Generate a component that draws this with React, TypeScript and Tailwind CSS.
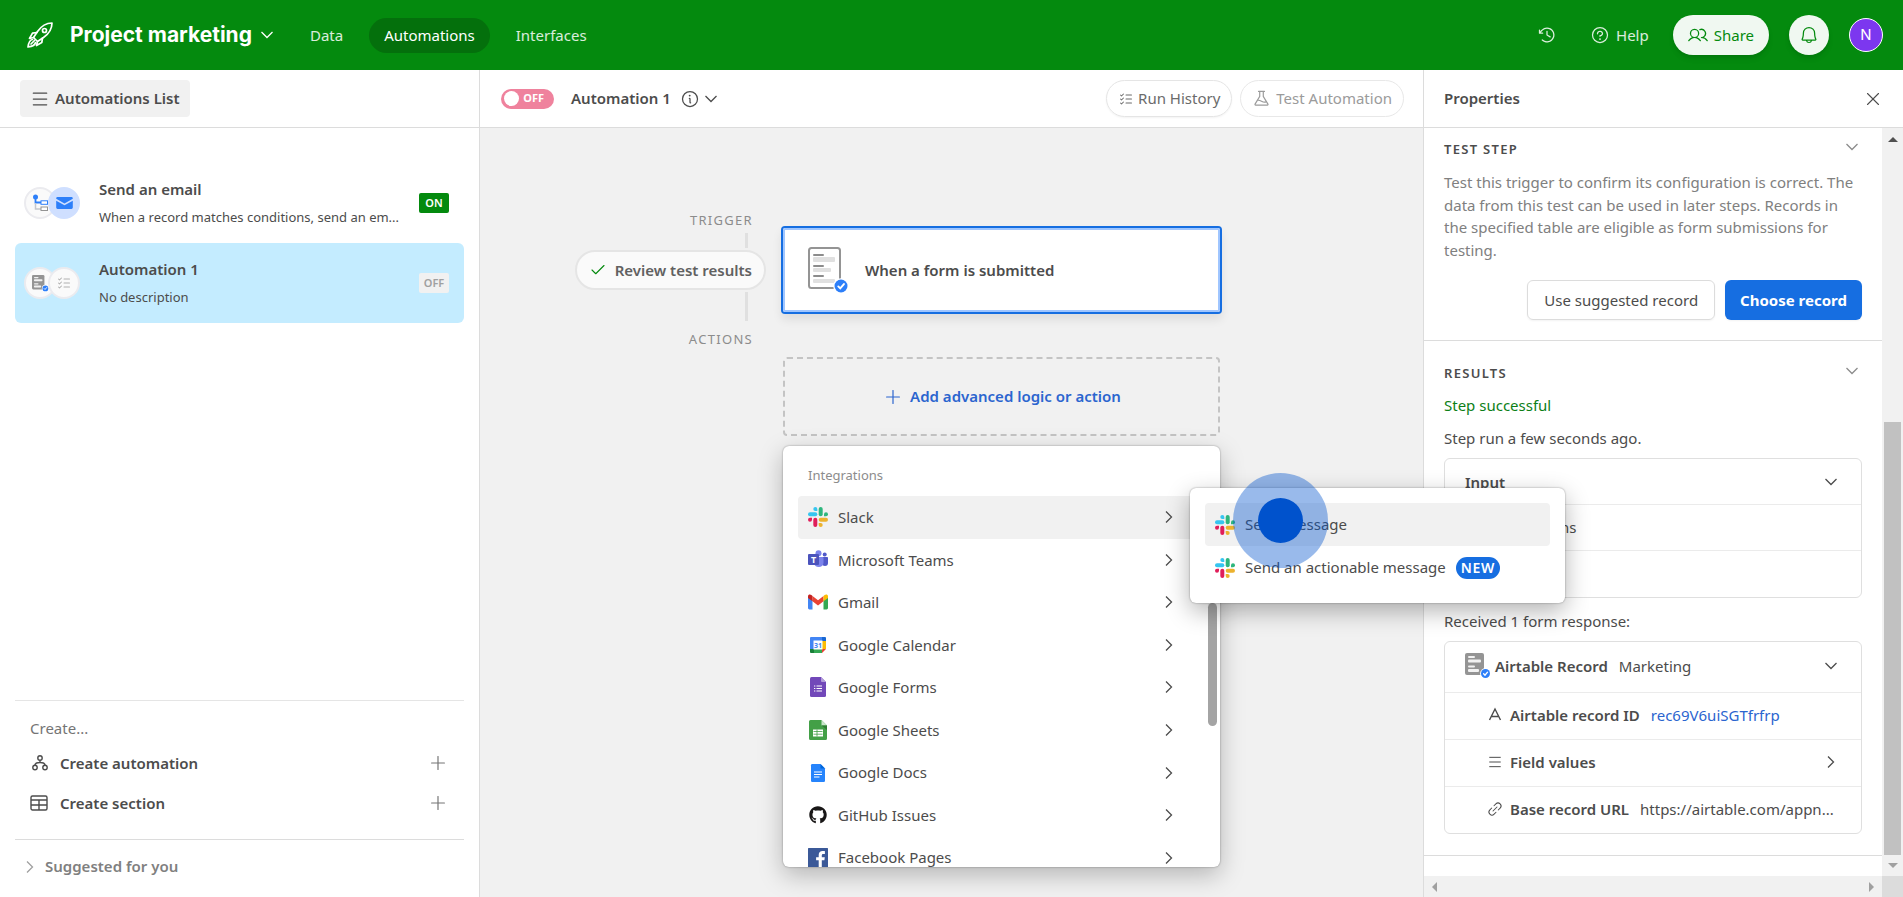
import { ReactNode, useState } from 'react';
import { Check, Menu, Plus, X } from 'lucide-react';
import {
    PiBell,
    PiClockCounterClockwise,
    PiFlask,
    PiInfo,
    PiLinkSimple,
    PiListChecks,
    PiQuestion,
    PiUsers,
} from 'react-icons/pi';
import { FaGithub } from 'react-icons/fa';

type Direction = 'down' | 'right';

function Chevron({ direction = 'down', className = '' }: { direction?: Direction; className?: string }) {
    return (
        <svg
            width="14"
            height="14"
            viewBox="0 0 14 14"
            fill="none"
            stroke="currentColor"
            strokeWidth="1.3"
            className={`shrink-0 ${className}`}
        >
            <path d={direction === 'down' ? 'M1.500 4L7 9.500L12.500 4' : 'M4 1.500L9.500 7L4 12.500'} />
        </svg>
    );
}

function RocketIcon() {
    return (
        <svg width="28" height="28" viewBox="0 0 28 28" fill="none" stroke="currentColor" strokeWidth="1.7" strokeLinejoin="round" strokeLinecap="round">
            <path d="M26 2C20 2 15 5.500 11.500 10.500L7.500 16.500L11.500 20.500L17.500 16.500C22.500 13 26 8 26 2Z" />
            <circle cx="18.500" cy="9.500" r="2" />
            <path d="M11 11.500L6.500 12.200L3.500 17.500L7.500 16.500" />
            <path d="M16.500 17L15.800 21.500L10.500 24.500L11.500 20.500" />
            <path d="M6.500 18.500C3.500 19 2.500 22 2 26C6 25.500 9 24.500 9.500 21.500" />
            <path d="M5 23L8.500 19.500" />
        </svg>
    );
}

function SlackIcon() {
    return (
        <svg width="20" height="20" viewBox="0 0 20 20" className="shrink-0">
            <g fill="#36c5f0">
                <rect x="0" y="5.300" width="9.300" height="4" rx="2" />
                <path d="M7.300 0a2 2 0 0 1 2 2v2h-2a2 2 0 0 1 0-4Z" />
            </g>
            <g fill="#2eb67d">
                <rect x="10.700" y="0" width="4" height="9.300" rx="2" />
                <path d="M20 7.300a2 2 0 0 1-2 2h-2v-2a2 2 0 0 1 4 0Z" />
            </g>
            <g fill="#ecb22e">
                <rect x="10.700" y="10.700" width="9.300" height="4" rx="2" />
                <path d="M12.700 20a2 2 0 0 1-2-2v-2h2a2 2 0 0 1 0 4Z" />
            </g>
            <g fill="#e01e5a">
                <rect x="5.300" y="10.700" width="4" height="9.300" rx="2" />
                <path d="M0 12.700a2 2 0 0 1 2-2h2v2a2 2 0 0 1-4 0Z" />
            </g>
        </svg>
    );
}

function TeamsIcon() {
    return (
        <svg width="20" height="20" viewBox="0 0 20 20">
            <circle cx="16.700" cy="4.500" r="2" fill="#5059c9" />
            <path d="M14 7H19.200A0.800 0.800 0 0 1 20 7.800V13A3 3 0 0 1 14 13Z" fill="#5059c9" />
            <circle cx="10.500" cy="3.300" r="3" fill="#7b83eb" />
            <path d="M6 7H14.600A0.900 0.900 0 0 1 15.500 7.900V13A4.800 4.800 0 0 1 6 13Z" fill="#7b83eb" />
            <rect y="4" width="11" height="11" rx="1" fill="#4b53bc" />
            <text x="5.500" y="12.500" fontSize="9" fontWeight="700" textAnchor="middle" fill="#fff">T</text>
        </svg>
    );
}

function GmailIcon() {
    return (
        <svg width="20" height="20" viewBox="0 0 20 20">
            <path d="M0 4.500L4.500 8V17.500H1.400A1.400 1.400 0 0 1 0 16.100Z" fill="#4285f4" />
            <path d="M20 4.500L15.500 8V17.500H18.600A1.400 1.400 0 0 0 20 16.100Z" fill="#34a853" />
            <path d="M4.500 4L10 8.200L15.500 4V9.300L10 13.500L4.500 9.300Z" fill="#ea4335" />
            <path d="M0 4.500C0 2.500 2 2 3.400 3.100L4.500 4V9.300L0 6Z" fill="#c5221f" />
            <path d="M20 4.500C20 2.500 18 2 16.600 3.100L15.500 4V9.300L20 6Z" fill="#fbbc04" />
        </svg>
    );
}

function CalendarIcon() {
    return (
        <svg width="20" height="20" viewBox="0 0 20 20">
            <path d="M3 2H14V6H6V14H2V3A1 1 0 0 1 3 2Z" fill="#4285f4" />
            <path d="M14 2H17A1 1 0 0 1 18 3V6H14Z" fill="#1967d2" />
            <path d="M14 6H18V14H14Z" fill="#fbbc04" />
            <path d="M6 14H14V18H6Z" fill="#34a853" />
            <path d="M2 14H6V18H3A1 1 0 0 1 2 17Z" fill="#188038" />
            <path d="M14 14H18L14 18Z" fill="#ea4335" />
            <path d="M5.500 5.500H14.500V14.500H5.500Z" fill="#fff" />
            <text x="10" y="12.800" fontSize="7" fontWeight="700" textAnchor="middle" fill="#4285f4">31</text>
        </svg>
    );
}

function FormsIcon() {
    return (
        <svg width="20" height="20" viewBox="0 0 20 20">
            <path d="M3.500 0H13L18 5V18.500A1.500 1.500 0 0 1 16.500 20H3.500A1.500 1.500 0 0 1 2 18.500V1.500A1.500 1.500 0 0 1 3.500 0Z" fill="#7248b9" />
            <path d="M13 0L18 5H14A1 1 0 0 1 13 4Z" fill="#b39ddb" />
            <path d="M6 9H7.300M6 11.500H7.300M6 14H7.300M8.500 9H14M8.500 11.500H14M8.500 14H14" stroke="#fff" strokeWidth="1" />
        </svg>
    );
}

function SheetsIcon() {
    return (
        <svg width="20" height="20" viewBox="0 0 20 20">
            <path d="M2.500 0H13.500L19 5.500V18.500A1.500 1.500 0 0 1 17.500 20H2.500A1.500 1.500 0 0 1 1 18.500V1.500A1.500 1.500 0 0 1 2.500 0Z" fill="#43a047" />
            <path d="M13.500 0L19 5.500H13.500Z" fill="#c8e6c9" />
            <path d="M13.500 5.500H19V10Z" fill="#2e7d32" />
            <path d="M5 9.500H15V16.500H5Z" fill="#fff" />
            <path d="M5.500 11.500H14.500M5.500 14.200H14.500M9 9.500V16.500" stroke="#43a047" strokeWidth="0.800" />
        </svg>
    );
}

function DocsIcon() {
    return (
        <svg width="20" height="20" viewBox="0 0 20 20">
            <path d="M4.200 1H12.500L17 5.500V17.800A1.200 1.200 0 0 1 15.800 19H4.200A1.200 1.200 0 0 1 3 17.800V2.200A1.200 1.200 0 0 1 4.200 1Z" fill="#2684fc" />
            <path d="M12.500 1L17 5.500H12.500Z" fill="#0066da" />
            <path d="M6 9H14M6 11.500H14M6 14H11.500" stroke="#fff" strokeWidth="1.200" />
        </svg>
    );
}

function FacebookIcon() {
    return (
        <svg width="20" height="20" viewBox="0 0 20 20">
            <rect width="20" height="20" rx="0.500" fill="#3b5998" />
            <path d="M13.800 20V12.300H16.400L16.800 9.300H13.800V7.400C13.800 6.500 14 5.900 15.300 5.900H16.900V3.200C16.600 3.150 15.600 3.100 14.600 3.100C12.200 3.100 10.700 4.500 10.700 7.100V9.300H8.100V12.300H10.700V20Z" fill="#fff" />
        </svg>
    );
}

function BlueCheck({ cx, cy, r }: { cx: number; cy: number; r: number }) {
    return (
        <g transform={`translate(${cx} ${cy}) scale(${r / 6})`}>
            <circle r="7.200" fill="#fff" />
            <circle r="6" fill="#2d7ff9" />
            <path d="M-2.500 0.400L-0.700 2.200L2.700 -1.800" stroke="#fff" strokeWidth="1.800" fill="none" strokeLinecap="round" />
        </g>
    );
}

function FormIcon() {
    return (
        <svg width="42" height="48" viewBox="0 0 42 48">
            <rect x="1" y="2" width="31" height="40" rx="2.500" fill="#fff" stroke="#949494" strokeWidth="2" />
            <g fill="#8c8c8c">
                <rect x="5" y="8" width="11" height="2" rx="1" />
                <rect x="5" y="19" width="11" height="2" rx="1" />
                <rect x="5" y="29" width="11" height="2" rx="1" />
            </g>
            <g fill="#e0e0e0">
                <rect x="5" y="11" width="22" height="5" rx="1" />
                <rect x="5" y="22" width="18" height="4" rx="1" />
                <rect x="5" y="33" width="22" height="4" rx="1" />
            </g>
            <BlueCheck cx={33} cy={40} r={6.5} />
        </svg>
    );
}

function RecordIcon({ size }: { size: number }) {
    return (
        <svg width={size} height={size} viewBox="0 0 26 26" className="shrink-0">
            <rect x="0" y="0" width="19" height="22" rx="2" fill="#949494" />
            <g fill="#f1f1f1">
                <rect x="3" y="3" width="7" height="2" rx="1" />
                <rect x="3" y="6.500" width="13" height="3" rx="1" />
                <rect x="3" y="12.500" width="7" height="2" rx="1" />
                <rect x="3" y="16" width="11" height="3" rx="1" />
            </g>
            <BlueCheck cx={20.5} cy={20.5} r={4.5} />
        </svg>
    );
}

function ConditionIcon() {
    return (
        <svg width="16" height="18" viewBox="0 0 16 18" fill="none">
            <path d="M3.500 3V8.500H9" stroke="#2d7ff9" strokeWidth="1.800" />
            <path d="M3.500 9V15H9" stroke="#c4c7cd" strokeWidth="1.500" />
            <circle cx="3.500" cy="3" r="2.500" fill="#2d7ff9" />
            <rect x="9" y="6.800" width="6.500" height="3.500" fill="#fff" stroke="#2d7ff9" />
            <rect x="9" y="13" width="6.500" height="3.500" fill="#fff" stroke="#949494" />
        </svg>
    );
}

function MailIcon() {
    return (
        <svg width="17" height="12" viewBox="0 0 18 13">
            <path d="M1.500 0H16.500A1.500 1.500 0 0 1 18 1.500V2L9 7L0 2V1.500A1.500 1.500 0 0 1 1.500 0Z" fill="#2d7ff9" />
            <path d="M0 4L9 9L18 4V11.500A1.500 1.500 0 0 1 16.500 13H1.500A1.500 1.500 0 0 1 0 11.500Z" fill="#2d7ff9" />
        </svg>
    );
}

function AutomationIcon() {
    return (
        <svg width="18" height="18" viewBox="0 0 18 18" fill="none" stroke="currentColor" strokeWidth="1.400">
            <circle cx="10" cy="4" r="2.200" />
            <circle cx="5" cy="13.500" r="2.200" />
            <circle cx="15" cy="13.500" r="2.200" />
            <path d="M10 6.200V8.500M5 11.300C5 9.500 6.500 8.500 10 8.500S15 9.500 15 11.300" />
        </svg>
    );
}

function SectionIcon() {
    return (
        <svg width="18" height="18" viewBox="0 0 18 18" fill="none" stroke="currentColor" strokeWidth="1.400">
            <rect x="1" y="2" width="16" height="14" rx="1.500" />
            <path d="M1 6H17M1 11H17M9 6V16" />
        </svg>
    );
}

function TextFieldIcon() {
    return (
        <svg width="16" height="16" viewBox="0 0 16 16" fill="none" stroke="currentColor" strokeWidth="1.400">
            <path d="M2.500 13L8 2L13.500 13M4.500 9.500H11.500" />
        </svg>
    );
}

const tabs = ['Data', 'Automations', 'Interfaces'];

function Header() {
    return (
        <header className="flex h-[70px] shrink-0 items-center bg-[#048a0e] px-5 text-white">
            <div className="flex items-center pl-[6px]">
                <RocketIcon />
                <button className="ml-4 flex items-center gap-2 font-['Inter',sans-serif] text-[21px] font-bold">
                    Project marketing
                    <Chevron />
                </button>
            </div>
            <nav className="ml-[21px] flex items-center gap-[11px]">
                {tabs.map((tab) => (
                    <a
                        key={tab}
                        href="#"
                        className={`flex h-[35px] items-center rounded-full px-[15px] ${tab === 'Automations' ? 'bg-[#04700c]' : 'text-white/85'}`}
                    >
                        {tab}
                    </a>
                ))}
            </nav>
            <div className="ml-auto flex items-center text-white/85">
                <button aria-label="History">
                    <PiClockCounterClockwise size={20} />
                </button>
                <button className="ml-[33px] flex items-center gap-[6px]">
                    <PiQuestion size={20} />
                    Help
                </button>
                <button className="ml-6 flex h-10 items-center gap-[6px] rounded-full bg-[#f0f8f1] px-[15px] text-[#048a0e] shadow-md">
                    <PiUsers size={20} />
                    Share
                </button>
                <button aria-label="Notifications" className="ml-5 grid size-10 place-items-center rounded-full bg-[#f0f8f1] text-[#048a0e] shadow-md">
                    <PiBell size={20} />
                </button>
                <button className="ml-5 size-[34px] rounded-full border border-white bg-[#7c37ef] font-['Inter',sans-serif] text-white">
                    N
                </button>
            </div>
        </header>
    );
}

function IconPair({ left, right, blue }: { left: ReactNode; right: ReactNode; blue?: boolean }) {
    return (
        <div className="flex shrink-0">
            <span className="grid size-8 place-items-center rounded-full border-2 border-[#ebebef] bg-[#fafafa]">{left}</span>
            <span
                className={`-ml-2 grid size-8 place-items-center rounded-full border-2 ${blue ? 'border-[#cfdfff] bg-[#cfdfff]' : 'border-[#ebebef] bg-[#fafafa]'}`}
            >
                {right}
            </span>
        </div>
    );
}

function Sidebar() {
    return (
        <aside className="flex w-[480px] shrink-0 flex-col border-r border-[#dcdcdc] bg-white">
            <div className="flex h-[58px] items-center border-b border-[#dcdcdc] px-5">
                <button className="flex h-[37px] items-center gap-[5px] rounded bg-[#f1f1f1] px-[10px] font-semibold">
                    <Menu size={20} strokeWidth={1.5} />
                    Automations List
                </button>
            </div>
            <ul className="px-[15px] pt-[35px]">
                <li className="flex h-20 items-center gap-[19px] rounded-md pr-[15px] pl-[9px]">
                    <IconPair left={<ConditionIcon />} right={<MailIcon />} blue />
                    <div className="min-w-0 flex-1">
                        <p className="leading-6 font-semibold">Send an email</p>
                        <p className="mt-1 text-[13px] leading-6">When a record matches conditions, send an em...</p>
                    </div>
                    <span className="grid h-5 w-[30px] place-items-center rounded-xs bg-[#048a0e] text-[11px] font-semibold text-white">ON</span>
                </li>
                <li className="flex h-20 items-center gap-[19px] rounded-md bg-[#c4ecff] pr-[15px] pl-[9px]">
                    <IconPair left={<RecordIcon size={17} />} right={<PiListChecks size={16} className="text-[#b0b0b0]" />} />
                    <div className="min-w-0 flex-1">
                        <p className="leading-6 font-semibold">Automation 1</p>
                        <p className="mt-1 text-[13px] leading-6">No description</p>
                    </div>
                    <span className="grid h-5 w-[30px] place-items-center rounded-xs bg-[#f1f1f1] text-[11px] font-semibold text-[#a0a0a0]">OFF</span>
                </li>
            </ul>
            <div className="mx-[15px] mt-auto border-t border-[#e5e5e5] px-[15px] pt-3 pb-4">
                <p className="h-[30px] leading-[30px] text-[#757575]">Create...</p>
                <button className="flex h-10 w-full items-center gap-3 font-semibold">
                    <AutomationIcon />
                    Create automation
                    <Plus size={22} strokeWidth={1.3} className="ml-auto text-[#757575]" />
                </button>
                <button className="flex h-10 w-full items-center gap-3 font-semibold">
                    <SectionIcon />
                    Create section
                    <Plus size={22} strokeWidth={1.3} className="ml-auto text-[#757575]" />
                </button>
            </div>
            <button className="mx-[15px] flex h-[58px] items-center gap-2 border-t border-[#dcdcdc] pb-1 pl-2 font-semibold text-[#808080]">
                <Chevron direction="right" className="text-[#a0a0a0]" />
                Suggested for you
            </button>
        </aside>
    );
}

function Toolbar() {
    const [on, setOn] = useState(false);

    return (
        <div className="flex h-[58px] shrink-0 items-center border-b border-[#dcdcdc] bg-white pr-[19px] pl-[21px]">
            <label className={`flex h-5 w-[53px] items-center justify-between rounded-full pr-[10px] pl-[3px] ${on ? 'bg-[#048a0e]' : 'bg-[#ef829d]'}`}>
                <input type="checkbox" checked={on} onChange={() => setOn(!on)} className="size-[15px] appearance-none rounded-full bg-white" />
                <span className="text-[11px] font-bold text-white">{on ? 'ON' : 'OFF'}</span>
            </label>
            <h1 className="ml-[17px] font-semibold">Automation 1</h1>
            <button aria-label="Automation details" className="ml-[9px] flex items-center gap-1">
                <PiInfo size={20} />
                <Chevron />
            </button>
            <button className="ml-auto flex h-[37px] items-center gap-1 rounded-full border border-[#e5e5e5] px-[11px] text-[#6b6b6b] shadow-xs">
                <PiListChecks size={16} />
                Run History
            </button>
            <button className="ml-2 flex h-[37px] items-center gap-[5px] rounded-full border border-[#e8e8e8] px-[11px] text-[#9b9b9b]">
                <PiFlask size={19} />
                Test Automation
            </button>
        </div>
    );
}

const integrations = [
    { name: 'Slack', icon: <SlackIcon /> },
    { name: 'Microsoft Teams', icon: <TeamsIcon /> },
    { name: 'Gmail', icon: <GmailIcon /> },
    { name: 'Google Calendar', icon: <CalendarIcon /> },
    { name: 'Google Forms', icon: <FormsIcon /> },
    { name: 'Google Sheets', icon: <SheetsIcon /> },
    { name: 'Google Docs', icon: <DocsIcon /> },
    { name: 'GitHub Issues', icon: <FaGithub size={18} color="#191717" /> },
    { name: 'Facebook Pages', icon: <FacebookIcon /> },
];

function IntegrationsMenu() {
    return (
        <div className="absolute inset-x-0 top-full z-20 mt-[10px] h-[421px] rounded-md bg-white shadow-[0_0_2px_rgba(0,0,0,0.4),0_8px_24px_rgba(0,0,0,0.25)]">
            <div className="h-full overflow-hidden rounded-md px-[15px] pt-[18px]">
                <p className="pl-[10px] text-[13px] leading-[22px] text-[#8c8c8c]">Integrations</p>
                <ul className="mt-[10px] grid h-[383px] auto-rows-fr pr-3">
                    {integrations.map(({ name, icon }) => (
                        <li key={name}>
                            <button
                                className={`flex h-full w-full items-center rounded-sm pr-[17px] pl-[10px] ${name === 'Slack' ? 'bg-[#f1f1f1]' : ''}`}
                            >
                                <span className="grid size-5 place-items-center">{icon}</span>
                                <span className="ml-[10px]">{name}</span>
                                <Chevron direction="right" className="ml-auto" />
                            </button>
                        </li>
                    ))}
                </ul>
            </div>
            <div className="absolute top-[157px] right-[3px] h-[123px] w-[9px] rounded-full bg-[#a4a4a4]"></div>
            <SlackMenu />
        </div>
    );
}

function SlackMenu() {
    return (
        <div className="absolute top-[42px] left-[407px] w-[375px] rounded-md bg-white px-[15px] pt-[15px] pb-[14px] shadow-[0_0_2px_rgba(0,0,0,0.4),0_8px_24px_rgba(0,0,0,0.3)]">
            <button className="flex h-[43px] w-full items-center gap-[10px] rounded-sm bg-[#f1f1f1] px-[10px]">
                <SlackIcon />
                Send message
            </button>
            <button className="flex h-[43px] w-full items-center gap-[10px] rounded-sm px-[10px]">
                <SlackIcon />
                Send an actionable message
                <span className="rounded-full bg-[#166ee1] px-[5px] text-[14px] leading-[22px] font-semibold tracking-wider text-white">NEW</span>
            </button>
            <div className="pointer-events-none absolute -top-[15px] left-[43px] grid size-[95px] place-items-center rounded-full bg-[#0052cc]/40">
                <div className="size-[45px] rounded-full bg-[#0052cc]"></div>
            </div>
        </div>
    );
}

function Canvas() {
    return (
        <div className="grid grow grid-cols-[303px_437px_1fr] items-start bg-[#f1f1f1] pt-[81px]">
            <div className="flex flex-col items-end pr-[17px] text-[13px] leading-[22px] tracking-widest text-[#8c8c8c]">
                <span className="pr-[13px]">TRIGGER</span>
                <div className="mt-[2px] mr-[18px] h-[15px] w-[3px] bg-[#e0e0e0]"></div>
                <button className="my-[2px] flex h-10 items-center gap-2 rounded-full border-2 border-[#e5e5e5] bg-[#fafafa] px-3 text-[15px] font-semibold tracking-normal text-[#616161]">
                    <Check size={18} strokeWidth={1.5} className="text-[#048a0e]" />
                    Review test results
                </button>
                <div className="mr-[18px] h-[29px] w-[3px] bg-[#e0e0e0]"></div>
                <span className="mt-[7px] pr-[13px]">ACTIONS</span>
            </div>
            <div className="pt-[19px]">
                <button className="flex h-[84px] w-full items-center gap-[15px] rounded-xs bg-white pl-[25px] font-semibold shadow-[0_0_0_2px_#166ee1,inset_0_0_0_2px_#a0c6ff,0_6px_10px_2px_rgba(0,0,0,0.08)]">
                    <FormIcon />
                    When a form is submitted
                </button>
                <div className="relative mt-[45px]">
                    <button className="flex h-[79px] w-full items-center justify-center gap-[6px] rounded-sm border-2 border-dashed border-[#c4c4c4] font-semibold text-[#2b65cf]">
                        <Plus size={22} strokeWidth={1.3} />
                        Add advanced logic or action
                    </button>
                    <IntegrationsMenu />
                </div>
            </div>
        </div>
    );
}

function SectionTitle({ children }: { children: ReactNode }) {
    return (
        <button className="flex h-[22px] w-full items-start justify-between pr-[3px] text-[13px] leading-[22px] font-semibold tracking-widest">
            {children}
            <Chevron className="mt-[2px] text-[#8c8c8c]" />
        </button>
    );
}

function ResultRow({ icon, label, children }: { icon: ReactNode; label: string; children?: ReactNode }) {
    return (
        <div className="flex h-[47px] items-center border-t border-[#ebebeb] pr-[23px] pb-[2px] pl-[42px]">
            {icon}
            <span className="mr-[11px] ml-[7px] font-semibold">{label}</span>
            {children}
        </div>
    );
}

function Properties() {
    return (
        <aside className="flex w-[480px] shrink-0 flex-col border-l border-[#dcdcdc] bg-white">
            <div className="flex h-[58px] shrink-0 items-center justify-between border-b border-[#dcdcdc] pr-[19px] pl-5">
                <h2 className="font-semibold">Properties</h2>
                <button aria-label="Close">
                    <X size={22} strokeWidth={1.2} />
                </button>
            </div>
            <div className="flex grow">
                <div className="flex min-w-0 grow flex-col">
                    <section className="border-b border-[#dcdcdc] px-5 pt-[10px] pb-5">
                        <SectionTitle>TEST STEP</SectionTitle>
                        <p className="mt-[11px] leading-normal text-[#808080]">
                            Test this trigger to confirm its configuration is correct. The data from this test can be used in later steps. Records in
                            the specified table are eligible as form submissions for testing.
                        </p>
                        <div className="mt-[19px] flex justify-end gap-[10px]">
                            <button className="h-10 rounded-md border border-[#dcdcdc] px-4 shadow-xs">Use suggested record</button>
                            <button className="h-10 rounded-md bg-[#166ee1] px-[15px] font-bold text-white shadow-xs">Choose record</button>
                        </div>
                    </section>
                    <section className="border-b border-[#dcdcdc] px-5 pt-[21px] pb-[21px] leading-[22px]">
                        <SectionTitle>RESULTS</SectionTitle>
                        <p className="mt-[10px] text-[#0d7f17]">Step successful</p>
                        <p className="mt-[11px]">Step run a few seconds ago.</p>
                        <div className="mt-[9px] rounded-md border border-[#dfdfdf]">
                            <button className="flex h-[45px] w-full items-center justify-between pr-[23px] pl-5 font-semibold">
                                Input
                                <Chevron />
                            </button>
                            <div className="h-[46px] border-t border-[#ebebeb] pl-[43px] leading-[44px]">Submissions</div>
                            <div className="h-[47px] border-t border-[#ebebeb]"></div>
                        </div>
                        <p className="mt-3">Received 1 form response:</p>
                        <div className="mt-[9px] rounded-md border border-[#dfdfdf]">
                            <button className="flex h-[50px] w-full items-center pr-[23px] pb-[2px] pl-5">
                                <RecordIcon size={26} />
                                <span className="mr-[11px] ml-1 font-semibold">Airtable Record</span>
                                Marketing
                                <Chevron className="ml-auto" />
                            </button>
                            <ResultRow icon={<TextFieldIcon />} label="Airtable record ID">
                                <a href="#" className="text-[#2b65cf]">rec69V6uiSGTfrfrp</a>
                            </ResultRow>
                            <ResultRow icon={<Menu size={16} strokeWidth={1.5} />} label="Field values">
                                <Chevron direction="right" className="ml-auto" />
                            </ResultRow>
                            <ResultRow icon={<PiLinkSimple size={16} />} label="Base record URL">
                                <span>https://airtable.com/appn...</span>
                            </ResultRow>
                        </div>
                    </section>
                    <div className="mt-auto flex h-[21px] items-center justify-between bg-[#f1f1f1] px-2">
                        <div className="h-0 w-0 border-y-5 border-r-5 border-y-transparent border-r-[#a0a0a0]"></div>
                        <div className="h-0 w-0 border-y-5 border-l-5 border-y-transparent border-l-[#a0a0a0]"></div>
                    </div>
                </div>
                <div className="flex w-[21px] shrink-0 flex-col items-center bg-[#f1f1f1] pt-[9px]">
                    <div className="h-0 w-0 border-x-5 border-b-5 border-x-transparent border-b-[#505050]"></div>
                    <div className="mt-auto h-[433px] w-[17px] bg-[#c1c1c1]"></div>
                    <div className="my-2 h-0 w-0 border-x-5 border-t-5 border-x-transparent border-t-[#a0a0a0]"></div>
                    <div className="h-[21px] w-full bg-[#dcdcdc]"></div>
                </div>
            </div>
        </aside>
    );
}

export default function App() {
    return (
        <div className="flex min-h-screen flex-col bg-white font-['Noto_Sans','Open_Sans',sans-serif] text-[15px] text-[#4c4c4c]">
            <Header />
            <div className="flex grow">
                <Sidebar />
                <main className="flex min-w-0 grow flex-col">
                    <Toolbar />
                    <Canvas />
                </main>
                <Properties />
            </div>
        </div>
    );
}
